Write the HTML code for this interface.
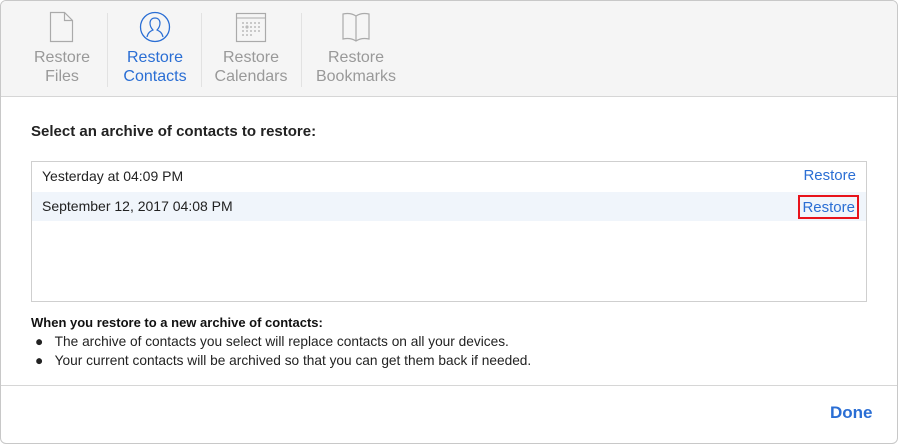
<!DOCTYPE html>
<html><head><meta charset="utf-8"><style>
*{margin:0;padding:0;box-sizing:border-box}
body{width:899px;height:444px;background:#fff;font-family:"Liberation Sans",sans-serif;position:relative;overflow:hidden}
.frame{position:absolute;left:0;top:0;width:898px;height:444px;border:1px solid #c8c8c8;border-radius:6px;overflow:hidden;background:#fff}
.bar{position:absolute;left:0;top:0;width:100%;height:96px;background:#f5f5f5;border-bottom:1px solid #d6d6d6}
.tab{position:absolute;top:0;height:96px;text-align:center;color:#999;font-size:16px;line-height:19px}
.tab svg{display:block;margin:10px auto 5px}
.div{position:absolute;top:12px;width:1px;height:74px;background:#e2e2e2}
.blue{color:#2a6ed4}
.abs{position:absolute}
</style></head><body><div class="frame">
<div class="bar">
 <div class="tab" style="left:21px;width:80px"><svg width="32" height="32" viewBox="0 0 32 32"><path d="M4.5 1.5h14l8 8v21h-22z M18.5 1.5v8h8" fill="none" stroke="#aaa" stroke-width="1.2"/></svg>Restore<br>Files</div>
 <div class="div" style="left:106px"></div>
 <div class="tab blue" style="left:114px;width:80px"><svg width="32" height="32" viewBox="0 0 32 32"><circle cx="16" cy="16" r="14.5" fill="none" stroke="#2a6ed4" stroke-width="1.3"/><path d="M8 26c1-5 4-6 6-7-2-2-3-4-3-7 0-3 2-5 5-5s5 2 5 5c0 3-1 5-3 7 2 1 5 2 6 7" fill="none" stroke="#2a6ed4" stroke-width="1.2"/></svg>Restore<br>Contacts</div>
 <div class="div" style="left:200px"></div>
 <div class="tab" style="left:205px;width:90px"><svg width="32" height="32" viewBox="0 0 32 32"><rect x="1.5" y="2.5" width="29" height="28" fill="none" stroke="#aaa" stroke-width="1.2"/><line x1="1.5" y1="7" x2="30.5" y2="7" stroke="#aaa"/><g fill="#bbb"><circle cx="8" cy="12" r="1"/><circle cx="12" cy="12" r="1"/><circle cx="16" cy="12" r="1"/><circle cx="20" cy="12" r="1"/><circle cx="24" cy="12" r="1"/><circle cx="8" cy="16" r="1"/><circle cx="12" cy="16" r="1.6"/><circle cx="16" cy="16" r="1"/><circle cx="20" cy="16" r="1"/><circle cx="24" cy="16" r="1"/><circle cx="8" cy="20" r="1"/><circle cx="12" cy="20" r="1"/><circle cx="16" cy="20" r="1"/><circle cx="20" cy="20" r="1"/><circle cx="24" cy="20" r="1"/><circle cx="8" cy="24" r="1"/><circle cx="12" cy="24" r="1"/><circle cx="16" cy="24" r="1"/></g></svg>Restore<br>Calendars</div>
 <div class="div" style="left:300px"></div>
 <div class="tab" style="left:310px;width:90px"><svg width="32" height="32" viewBox="0 0 32 32"><path d="M16 5c-3-2-8-3-13-2v25c5-1 10 0 13 2 3-2 8-3 13-2v-25c-5-1-10 0-13 2z M16 5v25" fill="none" stroke="#aaa" stroke-width="1.2"/></svg>Restore<br>Bookmarks</div>
</div>
<div class="abs" style="left:30px;top:122px;font-size:15px;font-weight:bold;color:#222">Select an archive of contacts to restore:</div>
<div class="abs" style="left:30px;top:160px;width:836px;height:141px;border:1px solid #cfcfcf">
 <div style="height:30px;line-height:28px;padding-left:10px;font-size:14px;color:#222">Yesterday at 04:09 PM<span class="blue" style="position:absolute;right:10px;font-size:15px">Restore</span></div>
 <div style="height:29px;line-height:28px;padding-left:10px;font-size:14px;color:#222;background:#f0f5fb;position:relative">September 12, 2017 04:08 PM<span class="blue" style="position:absolute;right:7px;top:3px;height:24px;line-height:21px;padding:0 2px;border:2px solid #e8131b;font-size:15px">Restore</span></div>
</div>
<div class="abs" style="left:30px;top:314px;font-size:13px;font-weight:bold;color:#111">When you restore to a new archive of contacts:</div>
<div class="abs" style="left:34px;top:331px;font-size:13.7px;color:#222;line-height:19px">
<div>●&nbsp;&nbsp;&nbsp;The archive of contacts you select will replace contacts on all your devices.</div>
<div>●&nbsp;&nbsp;&nbsp;Your current contacts will be archived so that you can get them back if needed.</div></div>
<div class="abs" style="left:0;top:384px;width:100%;height:1px;background:#d6d6d6"></div>
<div class="abs blue" style="left:829px;top:402px;font-size:17px;font-weight:bold">Done</div>
</div></body></html>
